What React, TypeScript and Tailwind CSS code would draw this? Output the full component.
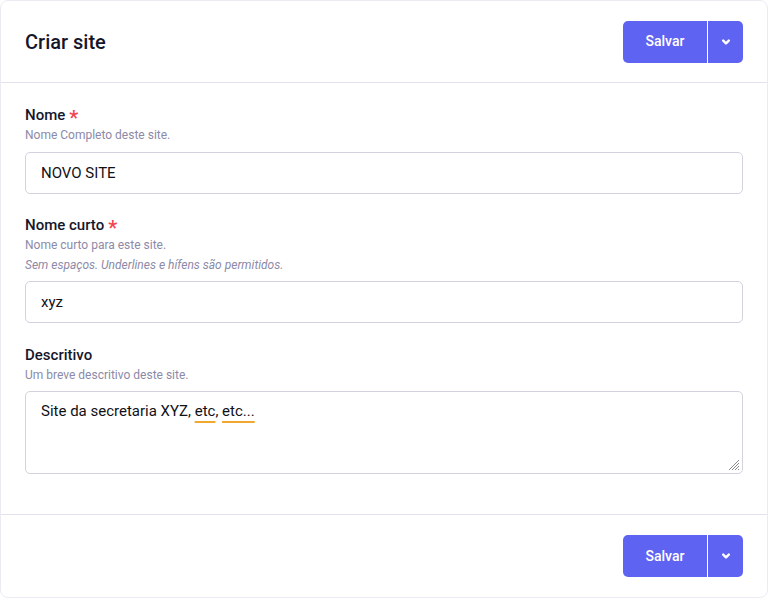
import React from "react";

function Chevron() {
  return (
    <svg width="12" height="12" viewBox="0 0 12 12" fill="none">
      <path d="M3.2 4.6 L6 7.4 L8.8 4.6" stroke="white" strokeWidth="2.4" strokeLinecap="round" strokeLinejoin="round" />
    </svg>
  );
}

function SaveButton() {
  return (
    <div className="flex h-[42px] rounded-[5px] overflow-hidden bg-[#5f63f2] text-white">
      <button className="w-[84px] h-full text-[14px] font-medium flex items-center justify-center">Salvar</button>
      <div className="w-px h-full bg-white" />
      <button className="w-[35px] h-full flex items-center justify-center">
        <Chevron />
      </button>
    </div>
  );
}

function Label({ children, required }: { children: React.ReactNode; required?: boolean }) {
  return (
    <div className="text-[15px] leading-[20px] font-medium text-[#16162a] flex items-center">
      {children}
      {required && (
        <span className="ml-[4px] text-[#f24454] text-[20px] leading-[20px] font-semibold translate-y-[3px]">*</span>
      )}
    </div>
  );
}

function Help({ children, italic }: { children: React.ReactNode; italic?: boolean }) {
  return <div className={"text-[12px] leading-[20px] text-[#8c8aa8]" + (italic ? " italic" : "")}>{children}</div>;
}

export default function App() {
  return (
    <div
      className="w-[768px] h-[598px] bg-white rounded-[8px] border border-[#ecebf3] flex flex-col overflow-hidden"
      style={{ fontFamily: "Roboto, 'Liberation Sans', sans-serif" }}
    >
      <div className="h-[82px] shrink-0 flex items-center justify-between pl-[24px] pr-[24px] border-b border-[#e3e2ee]">
        <h1 className="text-[20px] font-medium text-[#16162a]">Criar site</h1>
        <SaveButton />
      </div>
      <div className="flex-1 px-[24px] pt-[22px]">
        <div>
          <Label required>Nome</Label>
          <Help>Nome Completo deste site.</Help>
          <input
            readOnly
            value="NOVO SITE"
            className="mt-[7px] w-full h-[42px] rounded-[5px] border border-[#d3d2df] px-[15px] text-[15px] text-[#111118] outline-none"
          />
        </div>
        <div className="mt-[21px]">
          <Label required>Nome curto</Label>
          <Help>Nome curto para este site.</Help>
          <Help italic>Sem espaços. Underlines e hífens são permitidos.</Help>
          <input
            readOnly
            value="xyz"
            className="mt-[6px] w-full h-[42px] rounded-[5px] border border-[#d3d2df] px-[15px] text-[15px] text-[#111118] outline-none"
          />
        </div>
        <div className="mt-[22px]">
          <Label>Descritivo</Label>
          <Help>Um breve descritivo deste site.</Help>
          <div className="relative mt-[6px] w-full h-[83px] rounded-[5px] border border-[#d3d2df] px-[15px] pt-[9px] text-[15px] leading-[20px] text-[#111118]">
            Site da secretaria XYZ,{" "}
            <span className="underline decoration-[#f0a830] decoration-2 underline-offset-[5px]">etc</span>,{" "}
            <span className="underline decoration-[#f0a830] decoration-2 underline-offset-[5px]">etc...</span>
            <svg className="absolute right-[2px] bottom-[2px]" width="12" height="12" viewBox="0 0 12 12">
              <path d="M11 1 L1 11 M11 4 L4 11 M11 7 L7 11 M11 10 L10 11" stroke="#8a8a8a" strokeWidth="1" />
            </svg>
          </div>
        </div>
      </div>
      <div className="h-[83px] shrink-0 flex items-center justify-end px-[24px] border-t border-[#e3e2ee]">
        <SaveButton />
      </div>
    </div>
  );
}
